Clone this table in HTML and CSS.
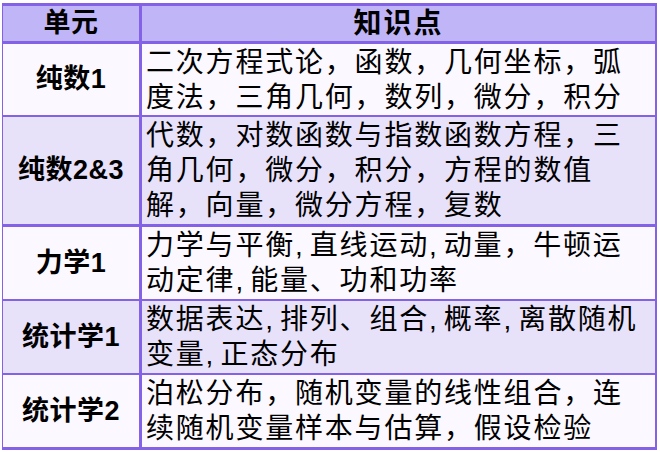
FILE: index.html
```html
<!DOCTYPE html>
<html lang="zh-CN">
<head>
<meta charset="utf-8">
<title>单元与知识点</title>
<link rel="stylesheet" href="styles.css">
</head>
<body>
<table class="units">
  <thead>
    <tr class="head">
      <th class="unit">单元</th>
      <th class="topics-head">知识点</th>
    </tr>
  </thead>
  <tbody>
    <tr class="light r1">
      <td class="unit">纯数1</td>
      <td class="topics">二次方程式论，函数，几何坐标，弧<br>度法，三角几何，数列，微分，积分</td>
    </tr>
    <tr class="dark r2">
      <td class="unit">纯数2&amp;3</td>
      <td class="topics">代数，对数函数与指数函数方程，三<br>角几何，微分，积分，方程的数值<br>解，向量，微分方程，复数</td>
    </tr>
    <tr class="light r3">
      <td class="unit">力学1</td>
      <td class="topics">力学与平衡<span class="hw">,</span>直线运动<span class="hw">,</span>动量，牛顿运<br>动定律<span class="hw">,</span>能量、功和功率</td>
    </tr>
    <tr class="dark r4">
      <td class="unit">统计学1</td>
      <td class="topics">数据表达<span class="hw">,</span>排列、组合<span class="hw">,</span>概率<span class="hw">,</span>离散随机<br>变量<span class="hw">,</span>正态分布</td>
    </tr>
    <tr class="light r5 last">
      <td class="unit">统计学2</td>
      <td class="topics">泊松分布，随机变量的线性组合，连<br>续随机变量样本与估算，假设检验</td>
    </tr>
  </tbody>
</table>
</body>
</html>
```
FILE: styles.css
```css
html, body {
  margin: 0;
  padding: 0;
  background: #ffffff;
}

.units {
  margin: 3px 0 0 2px;
  width: 655px;
  border-collapse: separate;
  border-spacing: 0;
  border-top: 3px solid #8462e8;
  border-left: 1px solid #8462e8;
  border-right: 2px solid #8462e8;
  table-layout: fixed;
  font-family: "Liberation Sans", "Noto Sans CJK SC", sans-serif;
  font-size: 28px;
  line-height: 35px;
  color: #000;
}

.units th,
.units td {
  padding: 0;
  border-bottom: 2px solid #8462e8;
  vertical-align: middle;
}

.units th.unit,
.units td.unit {
  width: 136px;
  border-right: 3px solid #8462e8;
  text-align: center;
  font-weight: bold;
  font-size: 27px;
  letter-spacing: 0.5px;
}

.head th {
  background: #c0b5f7;
  height: 35px;
  border-bottom-width: 3px;
  font-weight: bold;
  letter-spacing: 2px;
}

.topics-head {
  text-align: center;
}

.topics {
  padding: 1px 0 1px 4px !important;
  letter-spacing: 1.8px;
  font-weight: normal;
  white-space: nowrap;
}

.hw {
  letter-spacing: 7px;
}

.light td { background: #fcf8ff; }
.dark td { background: #e7e1fa; }

.r1 td { padding-bottom: 0 !important; }
.r2 td { border-bottom-width: 3px; }
.last td { border-bottom-width: 3px; }
```
